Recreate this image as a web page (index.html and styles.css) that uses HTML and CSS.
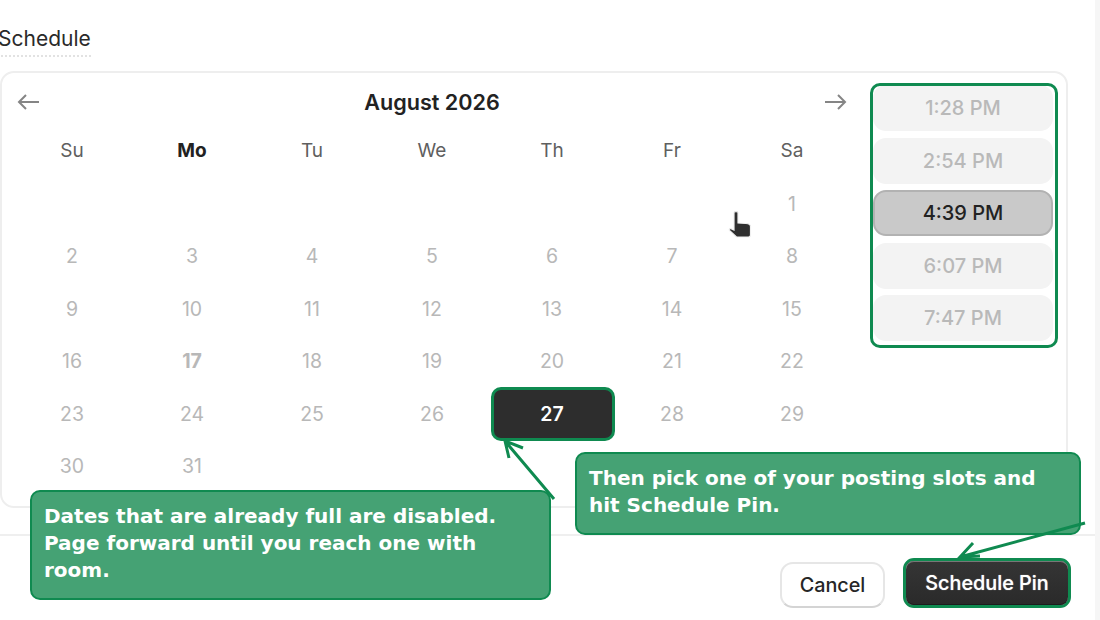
FILE: index.html
```html
<!DOCTYPE html>
<html lang="en">
<head>
<meta charset="utf-8">
<title>Schedule</title>
<link rel="stylesheet" href="styles.css">
</head>
<body>
<main class="page">
  <div class="label"><span class="label-text">Schedule</span></div>
  <section class="card">
    <div class="calendar">
      <div class="nav">
        <svg class="nav-icon" viewBox="0 0 24 24"><path d="M22 12H2M9 5l-7 7 7 7"/></svg>
        <span class="month">August 2026</span>
        <svg class="nav-icon" viewBox="0 0 24 24"><path d="M2 12h20M15 5l7 7-7 7"/></svg>
      </div>
      <div class="grid">
        <div class="dow">Su</div><div class="dow today">Mo</div><div class="dow">Tu</div><div class="dow">We</div><div class="dow">Th</div><div class="dow">Fr</div><div class="dow">Sa</div>
        <div></div><div></div><div></div><div></div><div></div><div></div><div class="day">1</div>
        <div class="day">2</div><div class="day">3</div><div class="day">4</div><div class="day">5</div><div class="day">6</div><div class="day">7</div><div class="day">8</div>
        <div class="day">9</div><div class="day">10</div><div class="day">11</div><div class="day">12</div><div class="day">13</div><div class="day">14</div><div class="day">15</div>
        <div class="day">16</div><div class="day strong">17</div><div class="day">18</div><div class="day">19</div><div class="day">20</div><div class="day">21</div><div class="day">22</div>
        <div class="day">23</div><div class="day">24</div><div class="day">25</div><div class="day">26</div><div class="day selected"><span>27</span></div><div class="day">28</div><div class="day">29</div>
        <div class="day">30</div><div class="day">31</div>
      </div>
    </div>
    <div class="times">
      <div class="slot">1:28 PM</div>
      <div class="slot">2:54 PM</div>
      <div class="slot active">4:39 PM</div>
      <div class="slot">6:07 PM</div>
      <div class="slot">7:47 PM</div>
    </div>
  </section>
  <footer class="footer">
    <button class="btn cancel">Cancel</button>
    <button class="btn primary"><span class="primary-inner">Schedule Pin</span></button>
  </footer>
</main>

<div class="note note-left">Dates that are already full are disabled. Page forward until you reach one with room.</div>
<div class="note note-right">Then pick one of your posting slots and hit Schedule Pin.</div>

<svg class="arrows" viewBox="0 0 1100 620">
  <path d="M554 499 505 441M523 448 505 441 509 458"/>
  <path d="M1085 523 960 557M973 543 960 557 980 556"/>
</svg>

<svg class="cursor" viewBox="0 0 40 40">
  <path class="cursor-hand" d="M14 9.500c0-1.200 4-1.200 4 0V20l8 .5c3 .2 4.500 1 4.500 3V32c0 1.200-1 2-2 2H16.500l-7-6.500c-.9-1 .3-2.200 1.500-1.800l3 1.300z"/>
</svg>
</body>
</html>
```

FILE: styles.css
```css
* { box-sizing: border-box; }
html, body { margin: 0; height: 100%; }
body {
  position: relative;
  width: 1100px;
  height: 620px;
  overflow: hidden;
  background: #f6f6f6;
  font-family: Inter, "Liberation Sans", sans-serif;
}
.page {
  width: 1095px;
  height: 620px;
  background: #fff;
  padding-top: 26px;
}
.label { height: 45px; margin-left: -1px; }
.label-text {
  display: inline-block;
  height: 31px;
  margin-left: -1px;
  font-size: 21px;
  line-height: 26px;
  color: #2a2a2a;
  border-bottom: 2px dotted #e2e2e2;
}
.card {
  display: flex;
  width: 1068px;
  height: 437px;
  padding: 10px 0 0 10px;
  border: 2px solid #eeeeee;
  border-radius: 14px;
  gap: 18px;
}
.calendar { width: 840px; flex: none; }
.nav {
  display: flex;
  align-items: center;
  justify-content: space-between;
  height: 38px;
  margin-bottom: 3px;
  padding: 0 5px;
}
.nav-icon {
  width: 24px;
  height: 24px;
  fill: none;
  stroke: #858585;
  stroke-width: 2;
}
.month { font-size: 21.600px; font-weight: 600; color: #222; }
.grid {
  display: grid;
  grid-template-columns: repeat(7, 120px);
  grid-template-rows: 53.500px;
  grid-auto-rows: 52.500px;
}
.dow, .day {
  display: flex;
  align-items: center;
  justify-content: center;
}
.dow { color: #5f5f5f; font-size: 19px; }
.dow.today { color: #222; font-weight: 700; }
.day { color: #b8b8b8; font-size: 19.500px; }
.day.strong { font-weight: 700; }
.day.selected { color: #fff; font-weight: 600; }
.day.selected span {
  display: flex;
  align-items: center;
  justify-content: center;
  width: 124px;
  height: 54px;
  flex: none;
  margin-left: 2px;
  padding-right: 2px;
  background: #2d2d2d;
  border: 3px solid #0f8a50;
  border-radius: 10px;
}
.times {
  display: flex;
  flex-direction: column;
  gap: 6.600px;
  width: 188px;
  height: 265px;
  flex: none;
  padding: 0 2px 0 0;
  overflow: hidden;
  border: 3px solid #0f8a50;
  border-radius: 10px;
}
.slot {
  display: flex;
  align-items: center;
  justify-content: center;
  height: 46px;
  flex: none;
  font-size: 20px;
  font-weight: 500;
  color: #b9b9b9;
  background: #f3f3f3;
  border-radius: 13px;
}
.slot:first-child { margin-top: -1px; }
.slot.active {
  color: #222;
  background: #c9c9c9;
  border: 2px solid #b2b2b2;
}
.footer {
  display: flex;
  align-items: flex-end;
  justify-content: flex-end;
  gap: 18px;
  width: 1095px;
  height: 74px;
  margin-top: 26px;
  padding: 0 24px 0 0;
  border-top: 2px solid #efefef;
}
.btn {
  font-family: inherit;
  font-size: 19.800px;
  font-weight: 500;
  padding: 0;
}
.cancel {
  width: 105px;
  height: 46px;
  color: #262626;
  background: #fff;
  border: 2px solid #e6e6e6;
  border-bottom-color: #d4d4d4;
  border-radius: 13px;
}
.primary {
  width: 168px;
  height: 50px;
  color: #fff;
  background: #fff;
  border: 3px solid #0f8a50;
  border-radius: 11px;
}
.primary-inner {
  display: flex;
  align-items: center;
  justify-content: center;
  height: 100%;
  text-shadow: 0 0 1px rgba(255, 255, 255, 0.7);
  background: linear-gradient(#353535, #2a2a2a);
  border-radius: 8px;
  box-shadow: inset 0 1px 0 #777, inset 0 -1px 0 #1c1c1c;
}
.note {
  position: absolute;
  padding: 11px 12px;
  font-family: "DejaVu Sans", sans-serif;
  font-size: 20px;
  font-weight: 700;
  line-height: 27px;
  color: #fff;
  background: #45a274;
  border: 2px solid #0f8a50;
  border-radius: 10px;
}
.note-left { left: 30px; top: 490px; width: 521px; height: 110px; }
.note-right { left: 575px; top: 452px; width: 506px; height: 83px; }
.arrows {
  position: absolute;
  left: 0;
  top: 0;
  width: 1100px;
  height: 620px;
  fill: none;
  stroke: #0f8a50;
  stroke-width: 3;
  pointer-events: none;
}
.cursor {
  position: absolute;
  left: 720px;
  top: 203px;
  width: 40px;
  height: 40px;
}
.cursor-hand {
  fill: #2f2f2f;
  stroke: #f0f0f0;
  stroke-width: 1.200;
}
```
